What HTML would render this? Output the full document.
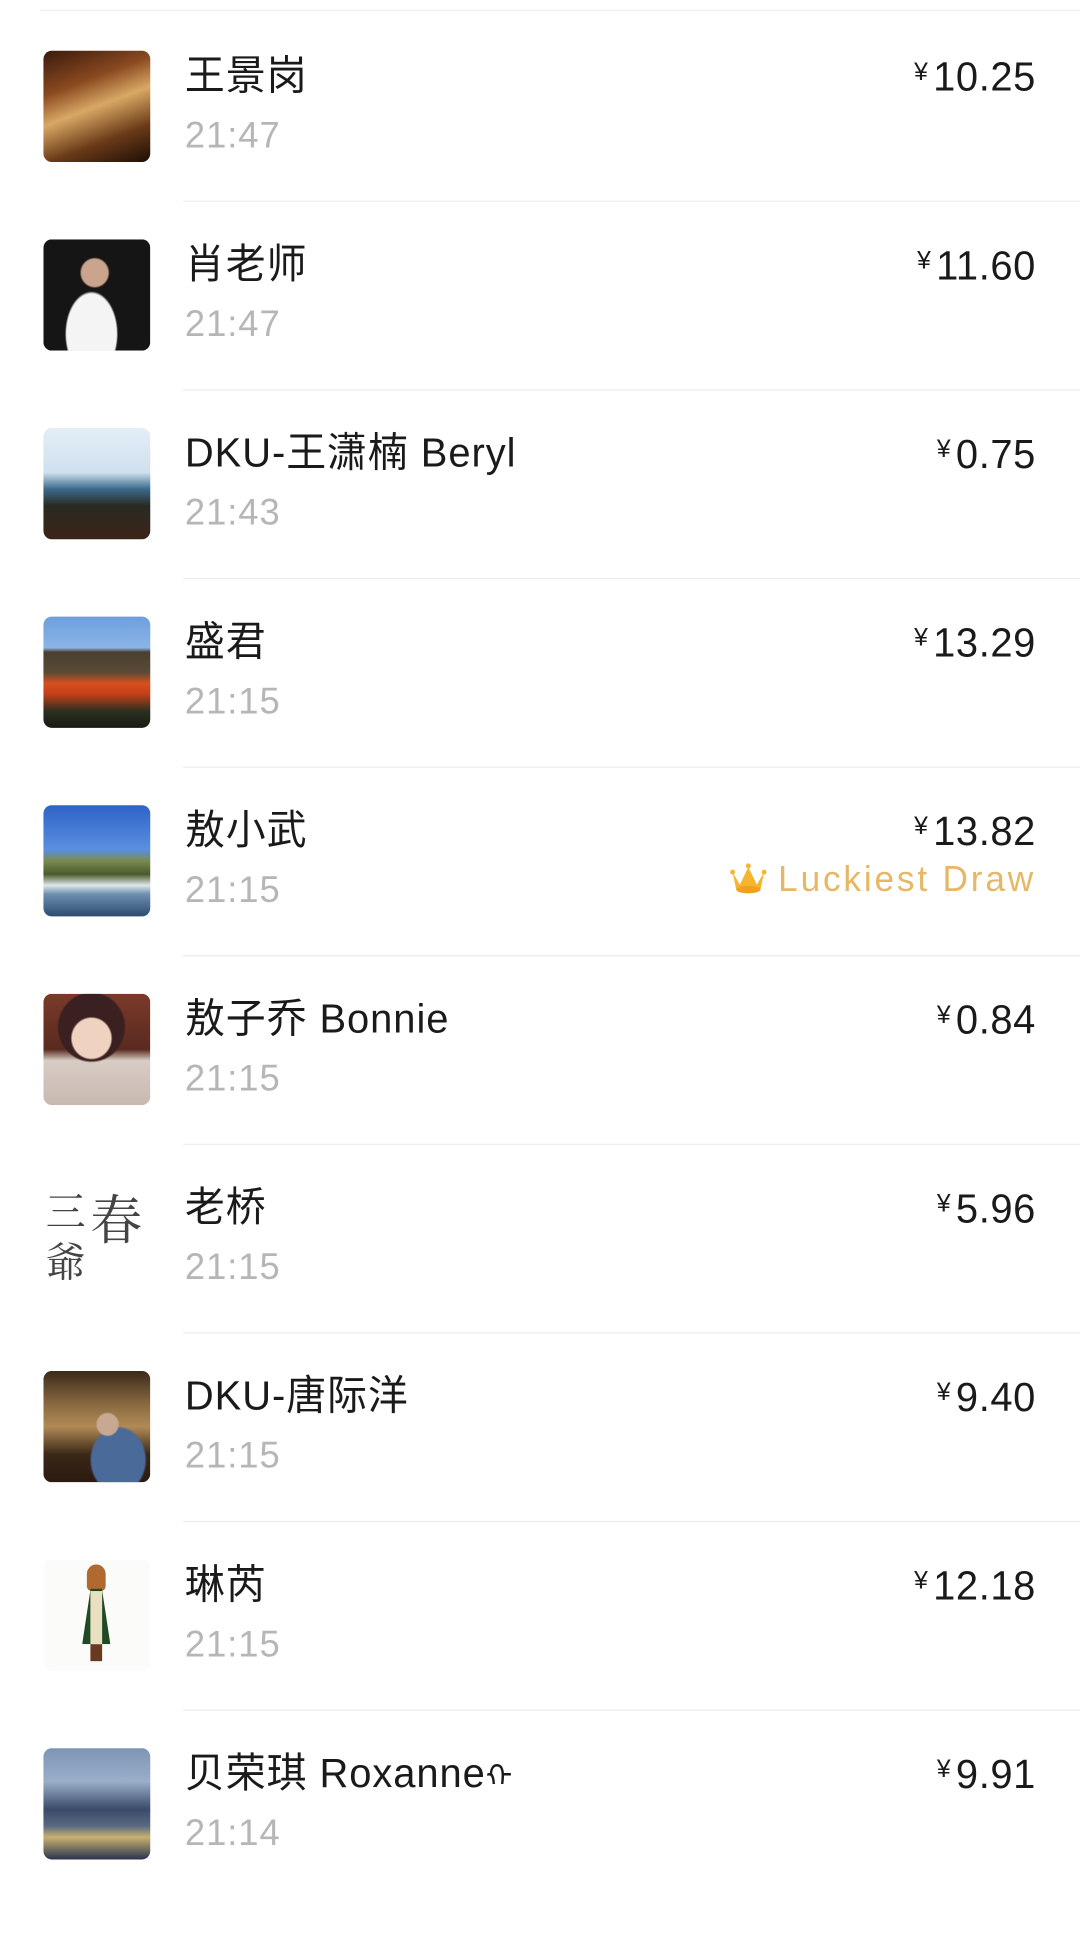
<!DOCTYPE html>
<html><head><meta charset="utf-8"><style>
html,body{margin:0;padding:0;background:#fff;width:1080px;height:1886px;overflow:hidden}
#w{position:absolute;left:0;top:0;width:920px;height:1560px;transform:scale(1.1739,1.209);transform-origin:0 0;font-family:"Liberation Sans","Noto Sans CJK SC",sans-serif}
.row{position:absolute;left:0;width:920px;height:156px}
.av{position:absolute;left:37px;top:0;width:91px;height:92px;border-radius:7px;overflow:hidden}
.nm{position:absolute;left:157.5px;top:1px;font-size:34px;color:#1a1a1a;line-height:40px;white-space:nowrap;letter-spacing:0.8px}
.tm{position:absolute;left:157.5px;top:51px;font-size:31px;color:#b6b6b6;line-height:38px;letter-spacing:0.8px}
.amt{position:absolute;right:37.5px;top:-1px;font-size:34px;color:#1a1a1a;line-height:38px;letter-spacing:0.5px}
.amt small{font-size:21px;vertical-align:9px;margin-right:4px}
.sep{position:absolute;left:156px;right:0;top:124px;height:1px;background:#ececec}
.luck{position:absolute;right:37.5px;top:44px;font-size:30px;color:#e6b865;line-height:36px;white-space:nowrap;letter-spacing:2.4px}
</style></head><body><div id="w">
<div style="position:absolute;left:34px;right:0;top:8px;height:1px;background:#efefef"></div>

<div class="row" style="top:42px"><div class="av" style="background:linear-gradient(160deg,#3a1a0c 0%,#8a4a20 30%,#d9a865 50%,#6a3a18 75%,#1d0d05 100%)"></div><div class="nm">王景岗</div><div class="tm">21:47</div><div class="amt"><small>¥</small>10.25</div><div class="sep"></div></div>

<div class="row" style="top:198px"><div class="av" style="background:radial-gradient(ellipse at 45% 85%,#f4f4f4 0 30%,transparent 32%),radial-gradient(circle at 48% 30%,#caa48c 0 14%,transparent 16%),#151515"></div><div class="nm">肖老师</div><div class="tm">21:47</div><div class="amt"><small>¥</small>11.60</div><div class="sep"></div></div>

<div class="row" style="top:354px"><div class="av" style="background:linear-gradient(180deg,#e4eef7 0%,#cfe0ee 40%,#3a6a8a 55%,#2a2a22 70%,#3a2418 100%)"></div><div class="nm">DKU-王潇楠 Beryl</div><div class="tm">21:43</div><div class="amt"><small>¥</small>0.75</div><div class="sep"></div></div>

<div class="row" style="top:510px"><div class="av" style="background:linear-gradient(180deg,#6d9fde 0%,#8ab4e6 28%,#4a3f30 32%,#5a4a36 50%,#d8501f 60%,#c23f16 70%,#2a3020 85%,#1a1a14 100%)"></div><div class="nm">盛君</div><div class="tm">21:15</div><div class="amt"><small>¥</small>13.29</div><div class="sep"></div></div>

<div class="row" style="top:666px"><div class="av" style="background:linear-gradient(180deg,#2e63c7 0%,#5b8fe0 40%,#7a8a50 50%,#4a5a2a 62%,#dfe6ea 72%,#6f8fb0 80%,#2a4a70 100%)"></div><div class="nm">敖小武</div><div class="tm">21:15</div><div class="amt"><small>¥</small>13.82</div>
<div class="luck"><svg width="31" height="27" viewBox="0 0 30 26" style="vertical-align:-3px;margin-right:10px"><path d="M2 8 L8 18 L15 4 L22 18 L28 8 L25 22 L5 22 Z" fill="#f5b52e"/><ellipse cx="15" cy="22" rx="10" ry="3" fill="#f2a020"/><circle cx="2" cy="8" r="2" fill="#f5b52e"/><circle cx="15" cy="3" r="2" fill="#f5b52e"/><circle cx="28" cy="8" r="2" fill="#f5b52e"/></svg>Luckiest Draw</div><div class="sep"></div></div>

<div class="row" style="top:822px"><div class="av" style="background:radial-gradient(circle at 45% 40%,#f0d2c0 0 22%,transparent 24%),radial-gradient(circle at 45% 30%,#3a2020 0 34%,transparent 36%),linear-gradient(180deg,#7a3a2a 0%,#5a2a20 50%,#d8ccc4 60%,#c8b8b0 100%)"></div><div class="nm">敖子乔 Bonnie</div><div class="tm">21:15</div><div class="amt"><small>¥</small>0.84</div><div class="sep"></div></div>

<div class="row" style="top:978px"><div class="av" style="background:#fff;color:#444;font-family:'Noto Serif CJK SC',serif;font-size:34px;line-height:40px"><span style="position:absolute;left:2px;top:2px">三</span><span style="position:absolute;left:40px;top:8px;font-size:44px">春</span><span style="position:absolute;left:2px;top:44px">爺</span></div><div class="nm">老桥</div><div class="tm">21:15</div><div class="amt"><small>¥</small>5.96</div><div class="sep"></div></div>

<div class="row" style="top:1134px"><div class="av" style="background:radial-gradient(circle at 60% 48%,#c8a890 0 12%,transparent 14%),radial-gradient(ellipse at 70% 80%,#4a6a9a 0 25%,transparent 27%),linear-gradient(180deg,#3a2a1a 0%,#8a6a40 30%,#b08a55 50%,#3a2818 75%,#2a1a10 100%)"></div><div class="nm">DKU-唐际洋</div><div class="tm">21:15</div><div class="amt"><small>¥</small>9.40</div><div class="sep"></div></div>

<div class="row" style="top:1290px"><div class="av" style="background:#fbfbfa"><div style="position:absolute;left:37px;top:4px;width:16px;height:22px;border-radius:8px 8px 4px 4px;background:#b06a30"></div><div style="position:absolute;left:33px;top:24px;width:24px;height:46px;background:#1f4a25;clip-path:polygon(30% 0,70% 0,100% 100%,0 100%)"></div><div style="position:absolute;left:40px;top:26px;width:10px;height:44px;background:#e8e0c0"></div><div style="position:absolute;left:40px;top:70px;width:10px;height:14px;background:#6a3a20"></div></div><div class="nm">琳芮</div><div class="tm">21:15</div><div class="amt"><small>¥</small>12.18</div><div class="sep"></div></div>

<div class="row" style="top:1446px"><div class="av" style="background:linear-gradient(180deg,#7d95b5 0%,#9aaec8 30%,#3a4a6a 55%,#5a6a80 70%,#c8b070 80%,#2a3450 100%)"></div><div class="nm">贝荣琪 Roxanne<span style="font-family:'DejaVu Sans',sans-serif;font-size:26px">ᡣ</span></div><div class="tm">21:14</div><div class="amt"><small>¥</small>9.91</div></div>
</div></body></html>
